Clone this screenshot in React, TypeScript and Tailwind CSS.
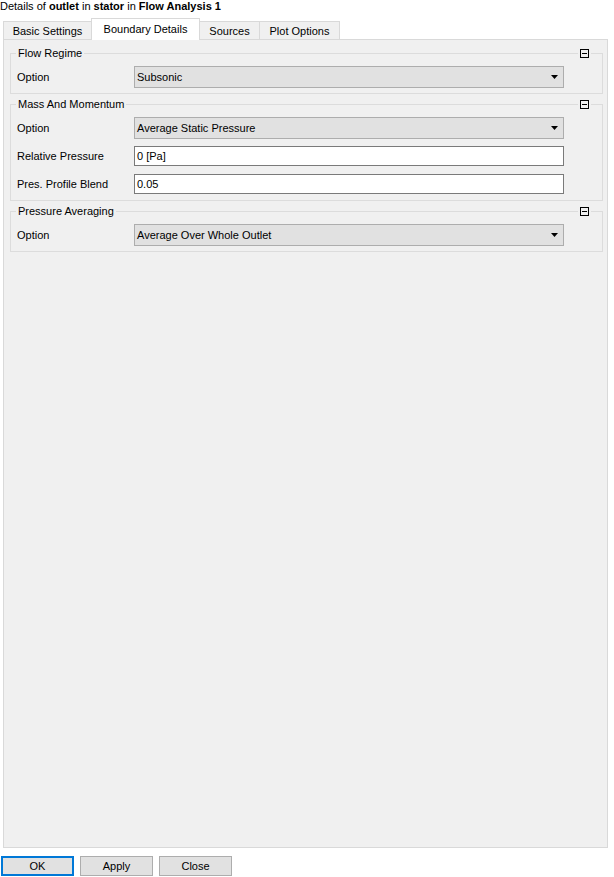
import type { ReactNode } from "react";

const TABS = [
  { label: "Basic Settings", width: "w-[89px]" },
  { label: "Boundary Details", width: "w-[109px]", active: true },
  { label: "Sources", width: "w-[61px]" },
  { label: "Plot Options", width: "w-[81px]" },
];

function CollapseIcon() {
  return (
    <span className="absolute right-[11px] top-[-11px] bg-[#f0f0f0] px-[2px]">
      <span className="flex h-[9px] w-[9px] items-center justify-center border border-black">
        <span className="h-px w-[5px] bg-black" />
      </span>
    </span>
  );
}

function Group({ title, className = "", children }: { title: string; className?: string; children: ReactNode }) {
  return (
    <fieldset className={`relative border border-[#dcdcdc] pb-[2px] pt-[3px] ${className}`}>
      <legend className="ml-[5px] px-[2px] leading-[14px]">{title}</legend>
      <CollapseIcon />
      {children}
    </fieldset>
  );
}

function Row({ label, children }: { label: string; children: ReactNode }) {
  return (
    <div className="flex h-[28px] items-center pl-[6px] pr-[38px]">
      <span className="w-[117px] shrink-0">{label}</span>
      <div className="flex-1">{children}</div>
    </div>
  );
}

function Select({ value }: { value: string }) {
  return (
    <div className="flex h-[22px] items-center justify-between border border-[#adadad] bg-[#e1e1e1] pl-[2px] pr-[5px]">
      <span>{value}</span>
      <svg width="7" height="4" viewBox="0 0 7 4">
        <polygon points="0,0 7,0 3.5,4" fill="#000" />
      </svg>
    </div>
  );
}

function TextBox({ value }: { value: string }) {
  return (
    <div className="flex h-[20px] items-center border border-[#7a7a7a] bg-white pl-[2px]">{value}</div>
  );
}

function Button({ label, primary }: { label: string; primary?: boolean }) {
  return (
    <button
      type="button"
      className={`flex h-[20px] w-[73px] items-center justify-center bg-[#e1e1e1] ${
        primary ? "border-2 border-[#0078d7]" : "border border-[#adadad]"
      }`}
    >
      {label}
    </button>
  );
}

export default function App() {
  return (
    <div className="h-[877px] w-[614px] overflow-hidden bg-white font-['Liberation_Sans',Arial,sans-serif] text-[11px] leading-[13px] text-black">
      <div className="h-[18px] whitespace-nowrap">
        Details of <b>outlet</b> in <b>stator</b> in <b>Flow Analysis 1</b>
      </div>

      <div className="flex h-[21px] items-end pl-[3px]">
        {TABS.map((tab, i) => (
          <div
            key={tab.label}
            className={`flex items-center justify-center border-l border-r border-t border-[#d9d9d9] ${tab.width} ${
              i > 0 ? "-ml-px" : ""
            } ${tab.active ? "relative z-10 -mb-px h-[22px] bg-white" : "h-[18px] bg-[#f0f0f0] pt-px"}`}
          >
            {tab.label}
          </div>
        ))}
      </div>

      <div className="ml-[3px] h-[809px] w-[605px] border border-[#d9d9d9] bg-[#f0f0f0] pl-[6px] pr-[4px] pt-[6px]">
        <Group title="Flow Regime">
          <Row label="Option">
            <Select value="Subsonic" />
          </Row>
        </Group>

        <Group title="Mass And Momentum" className="mt-[3px]">
          <Row label="Option">
            <Select value="Average Static Pressure" />
          </Row>
          <Row label="Relative Pressure">
            <TextBox value="0 [Pa]" />
          </Row>
          <Row label="Pres. Profile Blend">
            <TextBox value="0.05" />
          </Row>
        </Group>

        <Group title="Pressure Averaging" className="mt-[3px]">
          <Row label="Option">
            <Select value="Average Over Whole Outlet" />
          </Row>
        </Group>
      </div>

      <div className="mt-[8px] flex gap-[6px] pl-[1px]">
        <Button label="OK" primary />
        <Button label="Apply" />
        <Button label="Close" />
      </div>
    </div>
  );
}
